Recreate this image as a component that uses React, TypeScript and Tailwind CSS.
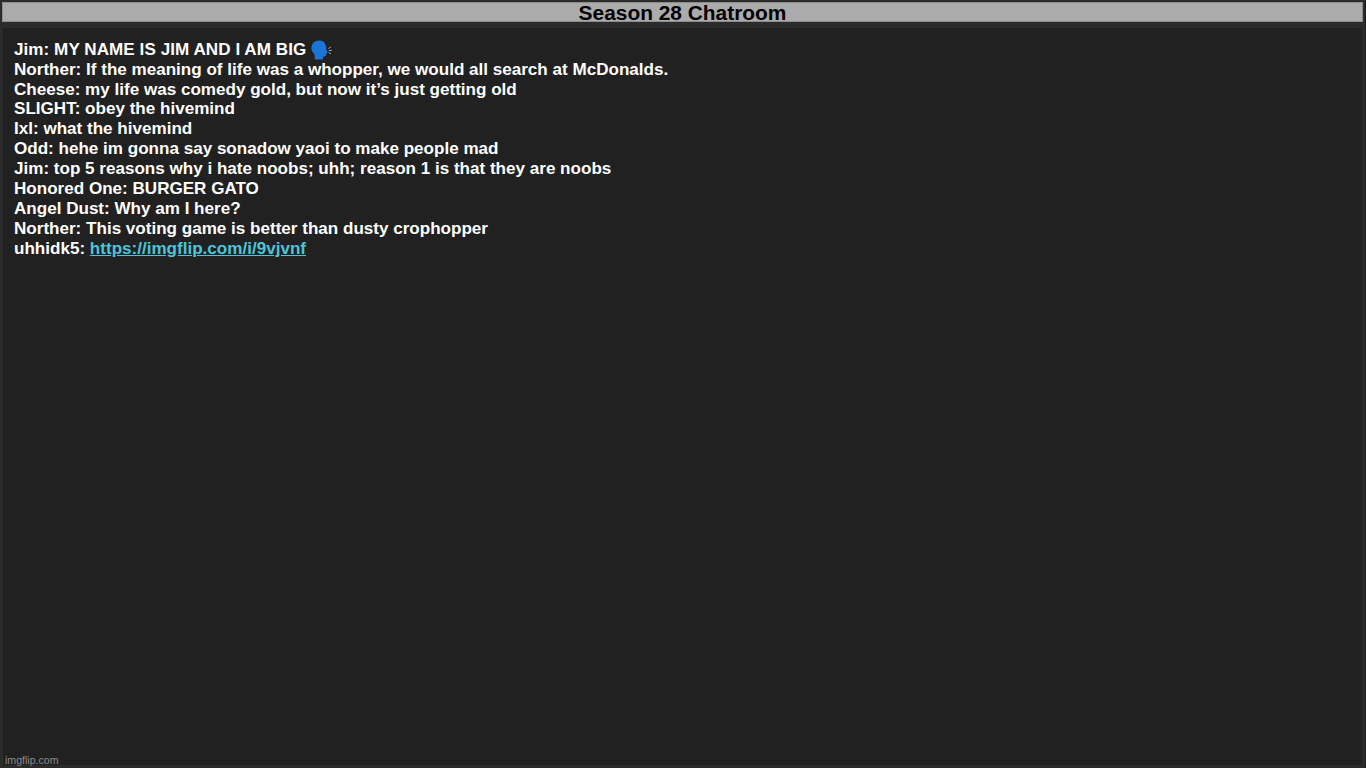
const messages = [
  "Norther: If the meaning of life was a whopper, we would all search at McDonalds.",
  "Cheese: my life was comedy gold, but now it’s just getting old",
  "SLIGHT: obey the hivemind",
  "Ixl: what the hivemind",
  "Odd: hehe im gonna say sonadow yaoi to make people mad",
  "Jim: top 5 reasons why i hate noobs; uhh; reason 1 is that they are noobs",
  "Honored One: BURGER GATO",
  "Angel Dust: Why am I here?",
  "Norther: This voting game is better than dusty crophopper",
];

const SpeakingHead = () => (
  <svg width="21" height="20" viewBox="0 0 21 20" className="inline-block align-top">
    <path
      d="M8.500.5C3.800.5.500 3.600.500 8c0 2.600 1 4.500 2.800 5.800L4 19.500h7.800l.4-2.900c1.700 0 2.900-.5 3.100-1.800l.2-1.700 1.200-.5-1.300-3C15.300 4.600 13.300.5 8.500.5z"
      fill="#1b75d8"
    />
    <g stroke="#9fb5b5" strokeWidth="0.9" fill="none">
      <path d="M17.500 8.500l2.500-1.500" />
      <path d="M17.800 10.500h3" />
      <path d="M17.500 12.500l2.500 1.500" />
    </g>
  </svg>
);

const App = () => {
  return (
    <div className="w-[1366px] h-[768px] bg-[#1c1c1c] overflow-hidden font-['Liberation_Sans',Arial,sans-serif]">
      <div className="w-[1365px] h-[768px] bg-[#2b2b2b] pt-[2px] pb-[3px] pl-[2px] pr-[2px] flex flex-col">
        <div className="h-[20px] bg-[#ababab] border border-[#8c8c8c] flex items-center justify-center pt-[2px] text-[20.9px] font-bold text-black">
          Season 28 Chatroom
        </div>
        <div className="relative flex-1 mt-[6px] ml-[1px] mr-[1px] bg-[#212121] pt-[11.75px] pl-[11px] text-[17.07px] leading-[19.9px] font-bold text-white">
          <div className="flex items-center gap-[5px] h-[19.9px]">
            <span className="tracking-[0.06px]">Jim: MY NAME IS JIM AND I AM BIG</span>
            <SpeakingHead />
          </div>
          {messages.map((line, i) => (
            <div key={i}>{line}</div>
          ))}
          <div>
            uhhidk5: <a className="text-[#4dc4d8] underline">https://imgflip.com/i/9vjvnf</a>
          </div>
          <span className="absolute left-[2px] bottom-[-2px] text-[10.6px] leading-[14px] font-normal text-[#8a8a8a]">
            imgflip.com
          </span>
        </div>
      </div>
    </div>
  );
};

export default App;
